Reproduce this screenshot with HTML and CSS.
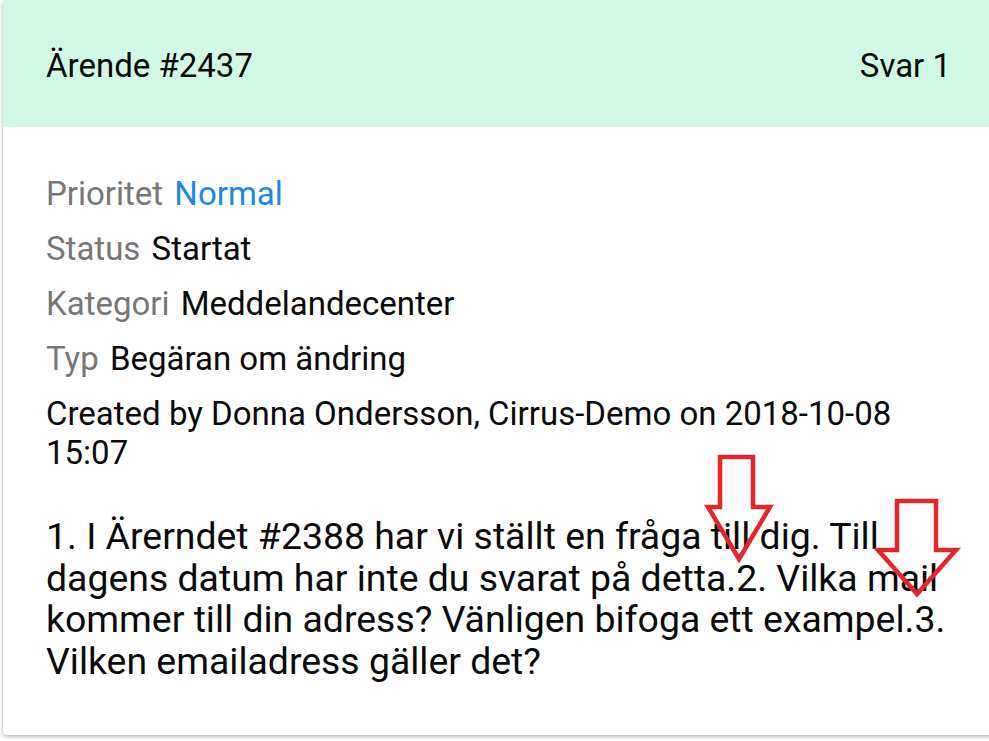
FILE: index.html
```html
<!DOCTYPE html>
<html>
<head>
<meta charset="utf-8">
<link rel="stylesheet" href="styles.css">
</head>
<body>
<div class="card">
  <div class="card-header">
    <span class="title">Ärende #2437</span>
    <span class="reply">Svar 1</span>
  </div>
  <div class="card-body">
    <div class="row"><span class="label">Prioritet</span> <span class="value prio">Normal</span></div>
    <div class="row"><span class="label">Status</span> <span class="value">Startat</span></div>
    <div class="row"><span class="label">Kategori</span> <span class="value">Meddelandecenter</span></div>
    <div class="row"><span class="label">Typ</span> <span class="value">Begäran om ändring</span></div>
    <div class="created">Created by Donna Ondersson, Cirrus-Demo on 2018-10-08 15:07</div>
    <p class="message">1. I Ärerndet #2388 har vi ställt en fråga till dig. Till dagens datum har inte du svarat på detta.2. Vilka mail kommer till din adress? Vänligen bifoga ett exampel.3. Vilken emailadress gäller det?</p>
  </div>
</div>
<svg class="arrows" width="989" height="741" viewBox="0 0 989 741">
  <polygon points="720,457 753,457 753,507 770,507 739,559 708,507 720,507" />
  <polygon points="897,501 936,501 936,550 956,550 917,594 878,550 897,550" />
</svg>
</body>
</html>
```
FILE: styles.css
```css
html, body {
  margin: 0;
  padding: 0;
  background: #ffffff;
}
body {
  width: 989px;
  height: 741px;
  overflow: hidden;
  position: relative;
  font-family: Roboto, "Liberation Sans", sans-serif;
  color: #0a0a0a;
}
.card {
  margin-left: 3px;
  width: 1000px;
  height: 735px;
  background: #fff;
  border-radius: 4px;
  box-shadow: 0 2px 4px rgba(0,0,0,0.25), 0 0 2px rgba(0,0,0,0.15);
  overflow: hidden;
}
.card-header {
  height: 123px;
  background: #d1f8e5;
  display: flex;
  align-items: center;
  justify-content: space-between;
  padding: 4px 41px 0 43px;
  width: 905px;
  font-size: 33px;
  color: #0a0a0a;
}
.card-body {
  padding: 39px 43px 0 43px;
  width: 905px;
}
.row {
  font-size: 33px;
  line-height: 55px;
}
.label {
  color: #777;
}
.value {
  color: #0a0a0a;
  margin-left: 3px;
}
.prio {
  color: #1e88e5;
}
.created {
  font-size: 33px;
  line-height: 39px;
  margin-top: 8px;
}
.message {
  margin: 44px 0 0 0;
  font-size: 37.4px;
  line-height: 41.5px;
  color: #0a0a0a;
}
.arrows {
  position: absolute;
  left: 0;
  top: 0;
  pointer-events: none;
}
.arrows polygon {
  fill: none;
  stroke: #e3262b;
  stroke-width: 4.5;
  stroke-linejoin: miter;
}
```
